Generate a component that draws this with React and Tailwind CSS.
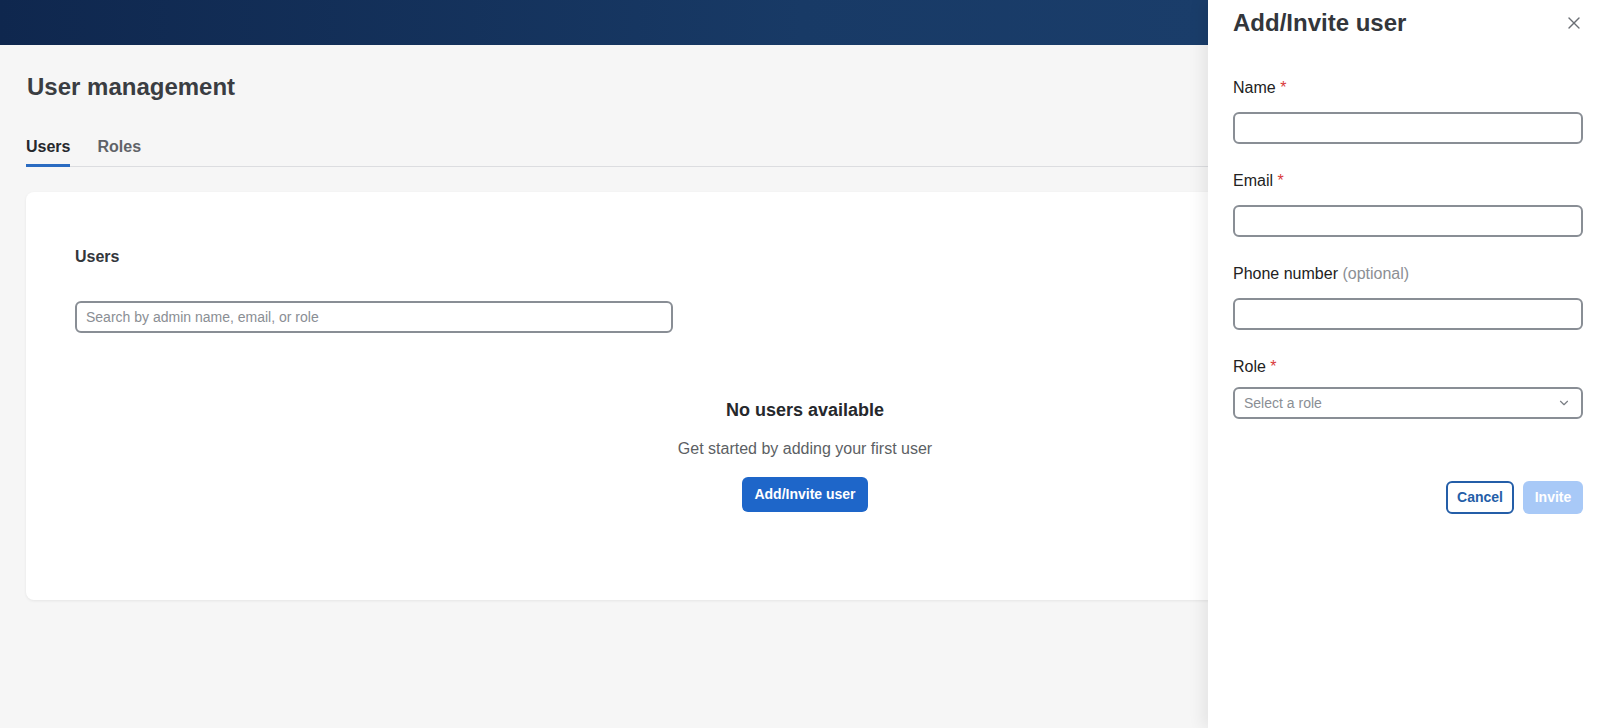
import { X, ChevronDown } from 'lucide-react';

const Field = ({ label, required, optional, gap = 'mt-[14px]', children }) => (
    <div className="flex flex-col">
        <label className="text-[16px] leading-5 text-[#222]">
            {label}
            {required && <span className="text-[#d93a3a]"> *</span>}
            {optional && <span className="text-[#8c8f94]"> (optional)</span>}
        </label>
        <div className={gap}>{children}</div>
    </div>
);

const TextInput = () => (
    <input
        type="text"
        className="w-full h-[32px] rounded-[6px] border-2 border-[#898e95] bg-white px-3 text-[14px] outline-none"
    />
);

const InviteDrawer = () => (
    <aside className="absolute top-0 right-0 h-full w-[395px] bg-white shadow-[-6px_0_14px_rgba(0,0,0,0.07)] pl-[25px] pr-[20px]">
        <div className="flex items-center justify-between h-[46px]">
            <h2 className="text-[24px] font-bold text-[#33363b]">Add/Invite user</h2>
            <button className="text-[#6b6f75] -mr-[1px]" title="Close">
                <X size={20} strokeWidth={1.6} />
            </button>
        </div>
        <div className="mt-[32px] flex flex-col gap-[27px]">
            <Field label="Name" required>
                <TextInput />
            </Field>
            <Field label="Email" required>
                <TextInput />
            </Field>
            <Field label="Phone number" optional>
                <TextInput />
            </Field>
            <Field label="Role" required gap="mt-[10px]">
                <div className="w-full h-[32px] rounded-[6px] border-2 border-[#898e95] bg-white pl-[9px] pr-[10px] flex items-center justify-between">
                    <span className="text-[14px] text-[#8a8e94]">Select a role</span>
                    <ChevronDown size={14} className="text-[#7b7f85]" />
                </div>
            </Field>
        </div>
        <div className="mt-[62px] flex justify-end gap-[9px]">
            <button className="h-[33px] px-[9px] rounded-[6px] border-2 border-[#245ea8] text-[14px] font-bold text-[#245ea8] bg-white">
                Cancel
            </button>
            <button className="h-[33px] w-[60px] rounded-[6px] bg-[#a8c9f7] text-[14px] font-bold text-white">
                Invite
            </button>
        </div>
    </aside>
);

export default function App() {
    return (
        <div className="relative h-[728px] overflow-hidden bg-[#f6f6f6] font-['Liberation_Sans',Arial,sans-serif]">
            <header className="h-[45px] bg-gradient-to-r from-[#0f274e] via-[#183a66] to-[#1c406e]" />
            <main className="pl-[26px] pr-[19px]">
                <h1 className="mt-[28px] text-[24px] leading-7 font-bold text-[#3a3d42] pl-[1px]">User management</h1>
                <nav className="mt-[34px] flex gap-[27px] border-b border-[#dcdde0]">
                    <div className="pb-[5px] border-b-[3px] border-[#2a6bc1] -mb-[1px]">
                        <span className="text-[16px] font-bold text-[#26282c]">Users</span>
                    </div>
                    <div className="pb-[5px]">
                        <span className="text-[16px] font-bold text-[#606368]">Roles</span>
                    </div>
                </nav>
                <section className="mt-[25px] h-[408px] bg-white rounded-[8px] shadow-[0_1px_3px_rgba(0,0,0,0.07)] px-[49px] pt-[55px]">
                    <h3 className="text-[16px] leading-5 font-bold text-[#33363b]">Users</h3>
                    <input
                        type="text"
                        placeholder="Search by admin name, email, or role"
                        className="mt-[34px] w-[598px] h-[32px] rounded-[6px] border-2 border-[#898e95] px-[9px] text-[14px] text-[#333] placeholder:text-[#8a8e94] outline-none"
                    />
                    <div className="mt-[64px] flex flex-col items-center">
                        <p className="text-[18px] font-bold text-[#26282c]">No users available</p>
                        <p className="mt-[13px] text-[16px] text-[#5c5f64]">Get started by adding your first user</p>
                        <button className="mt-[16px] h-[35px] px-[12px] rounded-[6px] bg-[#1e66c9] text-[14px] font-bold text-white">
                            Add/Invite user
                        </button>
                    </div>
                </section>
            </main>
            <InviteDrawer />
        </div>
    );
}
